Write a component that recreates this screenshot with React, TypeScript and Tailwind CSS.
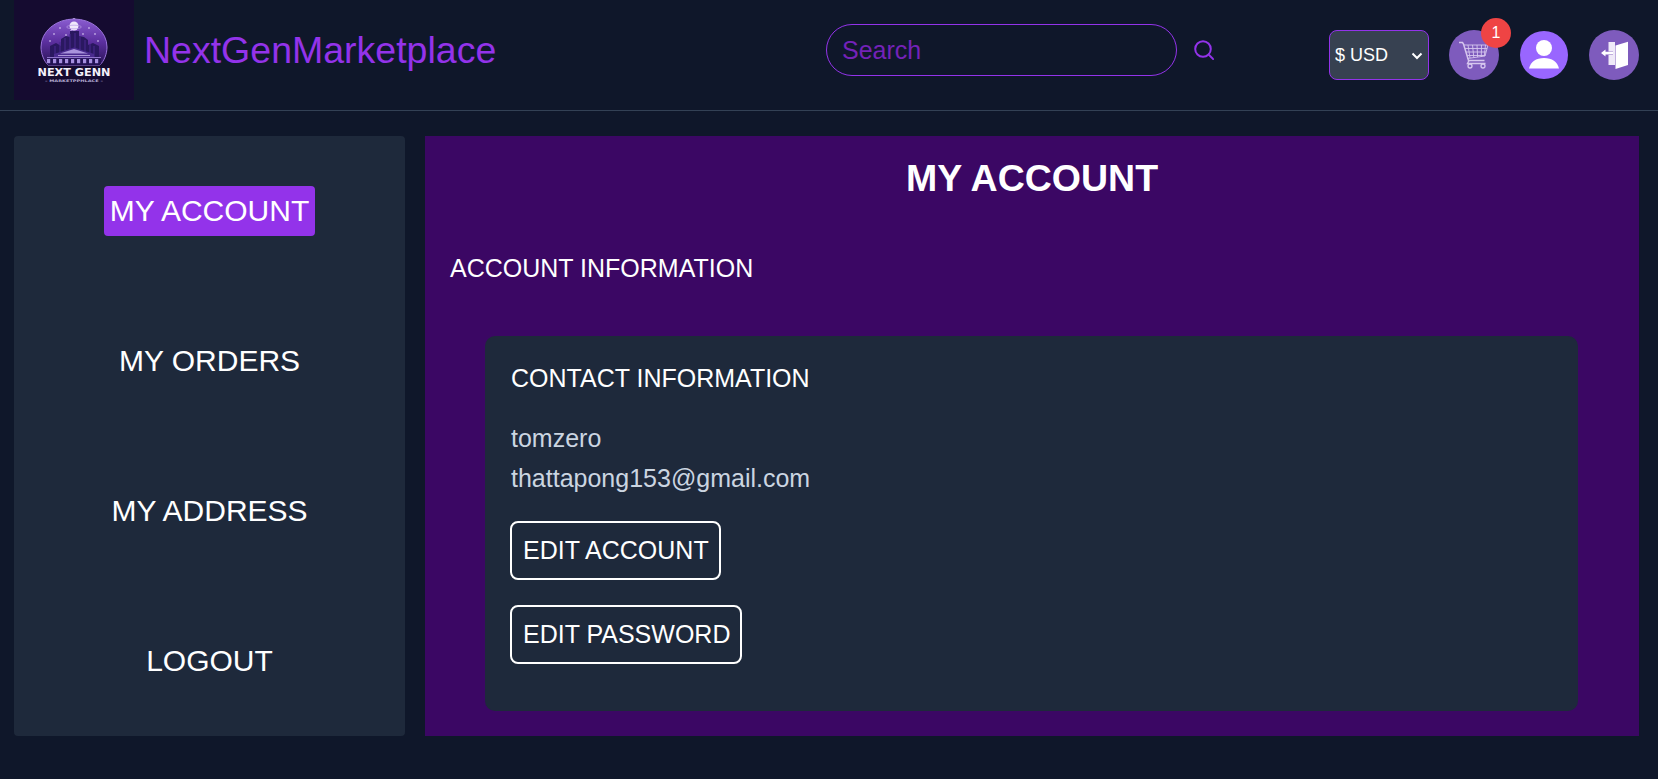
import React from "react";

function Logo() {
  const windows = [33, 39, 45, 51, 57, 63, 69, 75, 81];
  const stars = [[40, 34], [46, 28], [52, 35], [69, 34], [75, 28], [81, 34], [57, 31], [36, 41], [84, 41]];
  return (
    <svg viewBox="0 0 120 100" className="w-[120px] h-[100px] shrink-0">
      <defs>
        <linearGradient id="dome" x1="0" y1="0" x2="0" y2="1">
          <stop offset="0" stopColor="#8a5cd0" />
          <stop offset="0.5" stopColor="#5b2f9e" />
          <stop offset="1" stopColor="#2a1457" />
        </linearGradient>
        <clipPath id="domeClip">
          <path d="M27 47a33 28 0 0 1 66 0c0 7-3 14-7 18H34c-4-4-7-11-7-18z" />
        </clipPath>
      </defs>
      <rect width="120" height="100" fill="#150b30" />
      <circle cx="60" cy="19.500" r="1.600" fill="#d9c8f5" />
      <path d="M27 47a33 28 0 0 1 66 0c0 7-3 14-7 18H34c-4-4-7-11-7-18z" fill="url(#dome)" stroke="#9b74dc" strokeWidth="1" />
      <g clipPath="url(#domeClip)">
        <circle cx="60" cy="26" r="4.500" fill="#efe8fb" />
        <ellipse cx="60" cy="27" rx="7.500" ry="1.800" fill="none" stroke="#b79be6" strokeWidth="0.700" />
        {stars.map(([x, y], i) => (
          <circle key={i} cx={x} cy={y} r="0.800" fill="#eadfff" />
        ))}
        <path d="M36 65V46l6-3 5 3v-7l5-3 4 1v-6h9v5l5 1 4 3v5l5-2 6 3v19z" fill="#2a1860" />
        <path d="M41 46v18M46 42v22M51 38v26M56 34v30M61 33v31M66 36v28M71 40v24M76 44v20M80 46v18" stroke="#46298c" strokeWidth="1.100" />
        <path d="M40 54l20-6.500L80 54v4H40z" fill="#4a2b8f" />
        <path d="M46 53.500l14-4.500 14 4.500z" fill="#a993dc" />
        <path d="M44 55.500h32" stroke="#c4b3ea" strokeWidth="0.800" />
        <rect x="33" y="57" width="54" height="1.300" fill="#8f73ca" />
        <rect x="33" y="58.300" width="54" height="7" fill="#231254" />
        {windows.map((x) => (
          <rect key={x} x={x} y="59" width="3.200" height="4.200" fill="#a68fe0" />
        ))}
      </g>
      <text x="60" y="75.500" textAnchor="middle" textLength="73" lengthAdjust="spacingAndGlyphs" fill="#f3f0fa" fontFamily="'DejaVu Sans', sans-serif" fontWeight="700" fontSize="10.500">NEXT GENN</text>
      <text x="60" y="81.500" textAnchor="middle" textLength="58" lengthAdjust="spacingAndGlyphs" fill="#b8aed6" fontFamily="'DejaVu Sans', sans-serif" fontWeight="700" fontSize="3.400">– MARKETPPHLACE –</text>
    </svg>
  );
}

function SearchIcon() {
  return (
    <svg viewBox="0 0 20 20" className="w-5 h-5 shrink-0" fill="none" stroke="#9333ea" strokeWidth="2">
      <circle cx="9" cy="9" r="7.800" />
      <path d="M14.800 14.800l5 4.800" />
    </svg>
  );
}

function CartIcon() {
  return (
    <svg viewBox="0 0 50 50" className="w-[50px] h-[50px]" fill="none" stroke="#d6c6ee" strokeWidth="0.900">
      <path d="M10 12.500h3.500l1 1.500 5 16.500h16" strokeWidth="1.500" />
      <path d="M15 15h24l-3 11-17.500 2.500" />
      <path d="M19 15l2 13M23.500 15l1.300 12.500M28 15l.6 12M32.500 15l-.2 11.500M36.500 15l-1.200 11" />
      <path d="M16 18.500h22M17 22h20M18.300 25.500h18" />
      <path d="M20 30.500l-1.500 3h18" strokeWidth="1.400" />
      <circle cx="21" cy="36" r="2" strokeWidth="1.300" />
      <circle cx="34" cy="36" r="2" strokeWidth="1.300" />
    </svg>
  );
}

function UserIcon() {
  return (
    <svg viewBox="0 0 48 48" className="w-12 h-12" fill="#fff">
      <circle cx="24" cy="17" r="8" />
      <path d="M9 37.500c1.500-6.500 7-10.500 15-10.500s13.500 4 15 10.500z" />
    </svg>
  );
}

function DoorIcon() {
  return (
    <svg viewBox="0 0 50 50" className="w-[50px] h-[50px]" fill="#fff">
      <path d="M19.500 12H26v23h-6.500V25h4.500v-3.500h-4.500z" fill="#efe9f8" />
      <path d="M26.500 15.500L39 11.800V35l-12.500 4z" />
      <path d="M12 23l4.500-3.600v2.400H24v2.600h-7.500v2.200z" />
    </svg>
  );
}

const sideItems = ["MY ACCOUNT", "MY ORDERS", "MY ADDRESS", "LOGOUT"];

export default function App() {
  return (
    <div className="min-h-[779px] bg-[#0f172a] text-white font-['Liberation_Sans',Arial,sans-serif]">
      <header className="flex items-start h-[111px] border-b border-[#334155] pl-[14px] pr-[19px]">
        <Logo />
        <div className="flex items-center h-[100px] ml-[10px] w-[682px]">
          <span className="text-[37.5px] leading-10 text-[#9333ea]">NextGenMarketplace</span>
        </div>
        <div className="flex items-center gap-[17px] h-[100px] w-[503px]">
          <input
            placeholder="Search"
            className="w-[351px] h-[52px] rounded-full border border-[#9333ea] bg-transparent pl-[15px] text-[25px] outline-none placeholder:text-[#7422b8]"
          />
          <SearchIcon />
        </div>
        <div className="flex items-center h-[50px] mt-[30px]">
          <div className="relative w-[100px] h-[50px]">
            <select className="appearance-none w-[100px] h-[50px] rounded-lg border border-[#9333ea] bg-[#374151] text-white text-lg pl-[5px]">
              <option>$ USD</option>
            </select>
            <svg viewBox="0 0 12 8" className="absolute right-[6px] top-[22px] w-3 h-2 pointer-events-none" fill="none" stroke="#fff" strokeWidth="2">
              <path d="M1.500 1.500L6 6l4.500-4.500" />
            </svg>
          </div>
          <div className="relative w-[50px] h-[50px] rounded-full bg-[#7e5bbd] ml-5">
            <CartIcon />
            <span className="absolute -top-3 -right-3 w-[30px] h-[30px] rounded-full bg-[#ef4444] text-white text-base flex items-center justify-center">1</span>
          </div>
          <div className="w-12 h-12 rounded-full bg-[#9966ff] ml-[21px]">
            <UserIcon />
          </div>
          <div className="w-[50px] h-[50px] rounded-full bg-[#7e5bbd] ml-[21px]">
            <DoorIcon />
          </div>
        </div>
      </header>
      <main className="flex gap-5 pt-[25px] pl-[14px] pr-[19px]">
        <aside className="w-[391px] h-[600px] bg-[#1e293b] rounded-sm flex flex-col items-center justify-around">
          {sideItems.map((item, i) => (
            <a
              key={item}
              className={`text-[30px] leading-[50px] px-1.5 rounded-sm ${i === 0 ? "bg-[#9333ea]" : ""}`}
            >
              {item}
            </a>
          ))}
        </aside>
        <section className="flex-1 h-[600px] bg-[#3b0764] pt-[22px]">
          <h1 className="text-center text-[37.5px] font-bold leading-10">MY ACCOUNT</h1>
          <h2 className="text-[25px] leading-8 mt-[54px] ml-[25px]">ACCOUNT INFORMATION</h2>
          <div className="mt-[52px] ml-[60px] mr-[61px] h-[375px] rounded-[10px] bg-[#1e293b] pt-[26px] pl-[26px]">
            <h3 className="text-[25px] leading-8">CONTACT INFORMATION</h3>
            <p className="text-[25px] leading-10 text-[#cbd5e1] mt-[24px]">tomzero</p>
            <p className="text-[25px] leading-10 text-[#cbd5e1]">thattapong153@gmail.com</p>
            <div className="flex flex-col items-start gap-[25px] mt-[23px] -ml-[1px]">
              <button className="h-[59px] pl-[11px] pr-[10px] border-2 border-white rounded-lg text-[25px]">EDIT ACCOUNT</button>
              <button className="h-[59px] pl-[11px] pr-[10px] border-2 border-white rounded-lg text-[25px]">EDIT PASSWORD</button>
            </div>
          </div>
        </section>
      </main>
    </div>
  );
}
